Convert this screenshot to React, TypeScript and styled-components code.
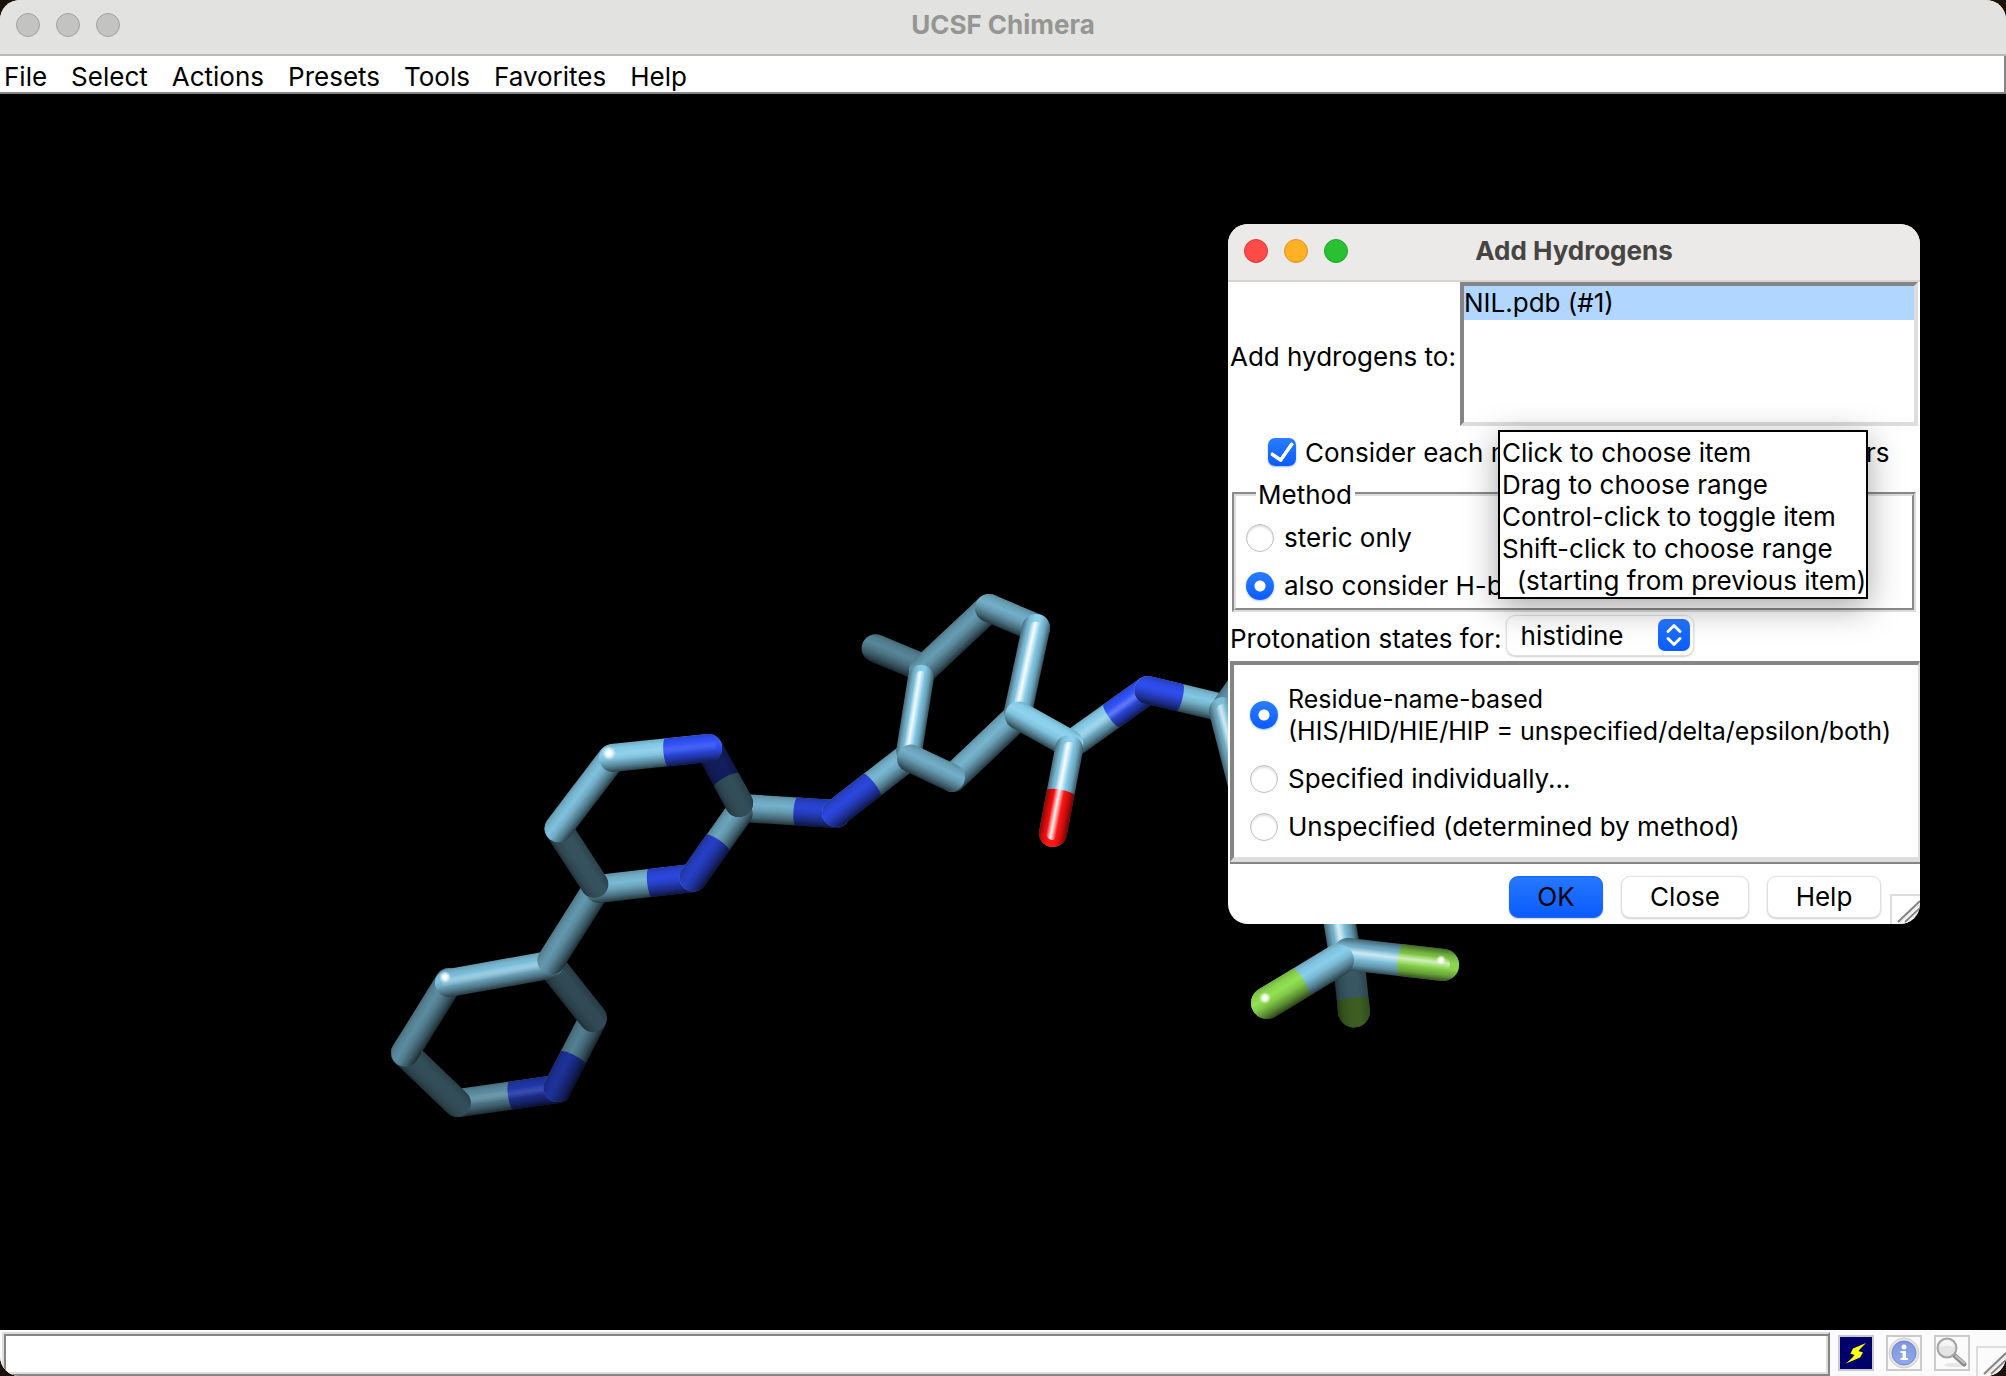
import React from "react";
import styled, { createGlobalStyle } from "styled-components";

const GlobalStyle = createGlobalStyle`
  * { box-sizing: border-box; }
  html, body, #root { height: 100%; }
  body {
    margin: 0;
    background: #1b120c;
    color: #000;
    font-family: Inter, "Liberation Sans", sans-serif;
    font-size: 26px;
    line-height: 32px;
    overflow: hidden;
  }
  button, input, select { font: inherit; color: inherit; }
`;

const SHADE = "#858585";
const LIGHT = "#dddddd";

/* ---------- main window ---------- */

const MainWindow = styled.main`
  position: relative;
  display: flex;
  flex-direction: column;
  height: 100vh;
  background: #fff;
  border-radius: 20px;
  overflow: hidden;
`;

const TitleBar = styled.header<{ $active?: boolean }>`
  display: grid;
  grid-template-columns: 1fr auto 1fr;
  align-items: center;
  flex: none;
  height: ${(p) => (p.$active ? 58 : 56)}px;
  padding: 0 16px ${(p) => (p.$active ? 2 : 4)}px;
  background: ${(p) => (p.$active ? "#ebeae8" : "#e2e2e0")};
  border-bottom: 2px solid ${(p) => (p.$active ? "#d6d5d4" : "#b8b8b7")};
`;

const Lights = styled.div`
  display: flex;
  gap: 16px;
`;

const Light = styled.button<{ $fill: string; $edge: string }>`
  width: 24px;
  height: 24px;
  padding: 0;
  border: 1px solid ${(p) => p.$edge};
  border-radius: 50%;
  background: ${(p) => p.$fill};
`;

const Title = styled.h1<{ $active?: boolean }>`
  margin: 0;
  font-size: 26px;
  line-height: 32px;
  font-weight: 700;
  color: ${(p) => (p.$active ? "#464544" : "#959593")};
`;

const MenuBar = styled.nav`
  display: flex;
  flex: none;
  gap: 24px;
  height: 38px;
  padding: 5px 4px 0;
  border-bottom: 2px solid ${SHADE};
  border-right: 2px solid ${SHADE};
`;

const MenuItem = styled.button`
  height: 32px;
  padding: 0;
  border: 0;
  background: none;
  line-height: 32px;
`;

const Viewport = styled.section`
  flex: 1;
  min-height: 0;
  background: #000;
`;

const Scene = styled.svg`
  display: block;
  width: 100%;
  height: 100%;
`;

const StatusBar = styled.footer`
  display: flex;
  flex: none;
  align-items: center;
  gap: 12px;
  height: 46px;
  padding-left: 2px;
  background: #fbfbfb;
`;

const StatusField = styled.input`
  flex: 1;
  align-self: flex-end;
  min-width: 0;
  height: 44px;
  margin-right: -4px;
  border: 2px solid;
  border-color: ${LIGHT} ${SHADE} ${SHADE} ${LIGHT};
  box-shadow: inset 2px 2px 0 ${SHADE}, inset -2px -2px 0 ${LIGHT};
  background: #fff;
  outline: none;
`;

const ToolButton = styled.button<{ $bg?: string }>`
  width: 36px;
  height: 36px;
  padding: 0;
  border: 2px solid #cbcbcb;
  background: ${(p) => p.$bg ?? "#fbfbfb"};
  svg { display: block; }
`;

const GripBox = styled.span`
  display: block;
  flex: none;
  align-self: flex-end;
  width: 30px;
  height: 30px;
  border: 2px solid ${LIGHT};
  border-width: 2px 0 0 2px;
  svg { display: block; }
`;

/* ---------- dialog ---------- */

const Dialog = styled.section`
  position: absolute;
  top: 224px;
  right: 86px;
  width: 692px;
  background: #fff;
  border-radius: 20px;
  overflow: hidden;
`;

const ListRow = styled.div`
  display: flex;
  align-items: center;
  justify-content: space-between;
  padding: 0 2px;
  label { padding-top: 5px; }
`;

const ListBox = styled.select`
  flex: none;
  width: 458px;
  height: 144px;
  padding: 0;
  border: 4px solid;
  border-color: ${SHADE} ${LIGHT} ${LIGHT} ${SHADE};
  border-radius: 0;
  background: #fff;
  outline: none;
  overflow: hidden;
  option {
    height: 34px;
    min-height: 34px;
    padding: 1px 0;
    line-height: 32px;
    border-radius: 0;
    color: #000;
  }
  option:checked {
    color: #000;
    background: #b1d6ff linear-gradient(#b1d6ff, #b1d6ff);
  }
`;

const CheckLabel = styled.label`
  display: flex;
  align-items: center;
  gap: 9px;
  height: 51px;
  padding: 2px 0 0 40px;
  white-space: nowrap;
`;

const CheckBox = styled.input`
  appearance: none;
  display: grid;
  place-items: center;
  width: 28px;
  height: 28px;
  margin: 0 0 2px;
  border-radius: 7px;
  background: linear-gradient(#2a7dff, #0a5cff);
  box-shadow: 0 1px 2px rgba(0, 90, 255, 0.4);
  &::after {
    content: "";
    width: 10px;
    height: 19px;
    margin-bottom: 4px;
    border: solid #fff;
    border-width: 0 4px 4px 0;
    border-radius: 2px;
    transform: rotate(35deg);
  }
`;

const Group = styled.fieldset`
  display: flex;
  flex-direction: column;
  gap: 2px;
  min-width: 0;
  margin: 0 4px;
  padding: 3px 10px 0;
  border: 4px groove #dddddd;
`;

const Legend = styled.legend`
  margin-left: 10px;
  padding: 2px 3px 0 2px;
`;

const RadioLabel = styled.label<{ $tall?: boolean; $dense?: boolean }>`
  display: flex;
  align-items: center;
  gap: 10px;
  min-height: ${(p) => (p.$tall ? 46 : 32)}px;
  padding-top: ${(p) => (p.$tall ? 2 : 0)}px;
  font-size: ${(p) => (p.$dense ? 25 : 26)}px;
  white-space: nowrap;
`;

const Radio = styled.input`
  appearance: none;
  flex: none;
  width: 28px;
  height: 28px;
  margin: 0;
  border: 1px solid #bdbdbd;
  border-radius: 50%;
  background: #fff;
  box-shadow: inset 0 2px 2px rgba(0, 0, 0, 0.12);
  &:checked {
    border: 0;
    background: radial-gradient(circle, #fff 5px, transparent 6px),
      linear-gradient(#2a7dff, #0a5cff);
    box-shadow: 0 1px 2px rgba(0, 90, 255, 0.35);
  }
`;

const StateRow = styled.div`
  display: flex;
  align-items: center;
  gap: 4px;
  height: 49px;
  padding: 4px 0 0 2px;
`;

const Picker = styled.div`
  position: relative;
  width: 188px;
  margin-bottom: 6px;
  svg {
    position: absolute;
    top: 4px;
    right: 4px;
    pointer-events: none;
  }
`;

const PickerSelect = styled.select`
  appearance: none;
  display: block;
  width: 100%;
  height: 41px;
  padding: 0 40px 0 14px;
  border: 1px solid #e0e0e0;
  border-radius: 9px;
  background: #fff;
  box-shadow: 0 1px 2px rgba(0, 0, 0, 0.2);
`;

const Frame = styled.div`
  display: flex;
  flex-direction: column;
  gap: 16px;
  margin-left: 2px;
  padding: 18px 16px 14px 16px;
  border: solid;
  border-width: 4px 2px 5px 4px;
  border-color: ${SHADE} ${LIGHT} ${LIGHT} ${SHADE};
`;

const Actions = styled.div`
  display: flex;
  justify-content: flex-end;
  gap: 18px;
  height: 62px;
  margin-left: 2px;
  padding-top: 12px;
  border-top: 2px solid ${SHADE};
`;

const ActionButton = styled.button<{ $primary?: boolean; $width: number }>`
  width: ${(p) => p.$width}px;
  height: 42px;
  padding: 0;
  border: 1px solid ${(p) => (p.$primary ? "#1a68ff" : "#e0e0e0")};
  border-radius: 9px;
  background: ${(p) => (p.$primary ? "linear-gradient(#2578ff, #0a5cff)" : "#fff")};
  box-shadow: 0 1px 2px rgba(0, 0, 0, 0.2);
`;

const CornerSlot = styled.div<{ $pull: number }>`
  display: flex;
  align-self: stretch;
  margin-left: -${(p) => p.$pull}px;
`;

const Tooltip = styled.div`
  position: absolute;
  top: 430px;
  right: 138px;
  width: 370px;
  padding: 5px 2px 0;
  border: 2px solid #000;
  background: #fff;
  box-shadow: 0 8px 32px rgba(0, 0, 0, 0.35);
  white-space: pre;
`;

/* ---------- molecule ---------- */

type Pt = [number, number];
type Tone = "c" | "n" | "o" | "f";

const BASE: Record<Tone, [number, number, number]> = {
  c: [135, 206, 235],
  n: [48, 80, 248],
  o: [255, 13, 13],
  f: [144, 224, 80],
};

/** Colour of an element at a brightness; above 1 it blends to white. */
const lit = (tone: Tone, b: number) => {
  const over = Math.max(0, b - 1);
  const k = Math.min(1, b);
  const [r, g, bl] = BASE[tone].map((v) => Math.round(v * k + (255 - v * k) * Math.min(1, over)));
  return `rgb(${r},${g},${bl})`;
};

interface Stick {
  a: Pt;
  b: Pt;
  tone: Tone;
  end?: Tone;
  at?: number;
  power: number;
  kind?: "top" | "mid" | "flat";
  gloss?: number;
  r?: number;
}

const PROFILES: Record<string, [number, number][]> = {
  top: [[0, 0.78], [0.15, 0.92], [0.35, 1], [0.55, 0.88], [0.8, 0.6], [1, 0.3]],
  mid: [[0, 0.5], [0.2, 0.85], [0.4, 1], [0.6, 1], [0.82, 0.75], [1, 0.38]],
  flat: [[0, 0.8], [0.3, 1], [0.6, 0.98], [0.85, 0.85], [1, 0.62]],
};

const sticks: Stick[] = [
  // pyridine ring
  { a: [459, 1103], b: [557, 1089], tone: "c", end: "n", at: 0.53, power: 0.7, gloss: 0.12 },
  { a: [592, 1021], b: [557, 1089], tone: "c", end: "n", at: 0.54, power: 0.62 },
  { a: [449, 982], b: [405, 1053], tone: "c", power: 0.68 },
  { a: [405, 1053], b: [457, 1103], tone: "c", power: 0.38, kind: "flat" },
  { a: [408, 1048], b: [405, 1053], tone: "c", power: 0.68 },
  { a: [551, 965], b: [593, 1018], tone: "c", power: 0.36, kind: "flat" },
  { a: [549, 965], b: [449, 983], tone: "c", power: 0.95, gloss: 0.25 },
  { a: [597, 888], b: [551, 961], tone: "c", power: 0.74 },
  // pyrimidine ring
  { a: [598, 889], b: [693, 878], tone: "c", end: "n", at: 0.55, power: 0.9 },
  { a: [742, 808], b: [836, 814], tone: "c", end: "n", at: 0.58, power: 0.86 },
  { a: [739, 813], b: [693, 878], tone: "c", end: "n", at: 0.46, power: 0.8 },
  { a: [558, 828], b: [595, 885], tone: "c", power: 0.4, kind: "flat" },
  { a: [709, 748], b: [739, 803], tone: "n", end: "c", at: 0.58, power: 0.38, kind: "flat" },
  { a: [612, 758], b: [558, 829], tone: "c", power: 0.94 },
  { a: [612, 758], b: [709, 748], tone: "c", end: "n", at: 0.56, power: 1.05, gloss: 0.08 },
  // toluene ring
  { a: [908, 757], b: [836, 813], tone: "c", end: "n", at: 0.5, power: 0.9 },
  { a: [923, 668], b: [875, 648], tone: "c", power: 0.65 },
  { a: [989, 608], b: [923, 670], tone: "c", power: 0.76 },
  { a: [1036, 628], b: [989, 608], tone: "c", power: 0.85 },
  { a: [1017, 717], b: [953, 778], tone: "c", power: 0.88 },
  { a: [921, 677], b: [909, 752], tone: "c", power: 1, kind: "mid", gloss: 0.9, r: 13 },
  { a: [952, 778], b: [910, 758], tone: "c", power: 0.85 },
  { a: [1036, 628], b: [1018, 712], tone: "c", power: 1.05, kind: "mid", gloss: 0.95 },
  // amide
  { a: [1072, 744], b: [1148, 690], tone: "c", end: "n", at: 0.52, power: 1.05, gloss: 0.22 },
  { a: [1070, 744], b: [1018, 715], tone: "c", power: 1.08 },
  { a: [1069, 749], b: [1053, 833], tone: "c", end: "o", at: 0.52, power: 1.05, kind: "mid", gloss: 0.95 },
  { a: [1223, 708], b: [1148, 690], tone: "c", end: "n", at: 0.58, power: 0.97 },
  // trifluoromethyl-phenyl
  { a: [1226, 707], b: [1258, 662], tone: "c", power: 0.72 },
  { a: [1223, 711], b: [1252, 824], tone: "c", power: 0.92, kind: "mid", gloss: 0.65 },
  { a: [1348, 955], b: [1354, 1012], tone: "c", end: "f", at: 0.8, power: 0.42, kind: "flat", r: 16 },
  { a: [1336, 900], b: [1345, 955], tone: "c", power: 0.95, kind: "mid", gloss: 0.7, r: 16 },
  { a: [1348, 954], b: [1443, 965], tone: "c", end: "f", at: 0.56, power: 0.95, kind: "mid", gloss: 0.6, r: 16 },
  { a: [1338, 960], b: [1267, 1003], tone: "c", end: "f", at: 0.52, power: 1.02, r: 16 },
];

const glints: { c: Pt; r: number }[] = [
  { c: [445, 977], r: 6 },
  { c: [609, 753], r: 7 },
  { c: [1265, 998], r: 6 },
  { c: [1441, 960], r: 5 },
];

/** Cylinder outline: curved rim at the start, rounded cap at the end. */
const outline = (a: Pt, b: Pt, r: number, rim: number) => {
  const dx = b[0] - a[0];
  const dy = b[1] - a[1];
  const len = Math.hypot(dx, dy) || 1;
  const px = (-dy / len) * r;
  const py = (dx / len) * r;
  const deg = (Math.atan2(dy, dx) * 180) / Math.PI;
  const f = (n: number) => n.toFixed(1);
  return (
    `M${f(a[0] + px)} ${f(a[1] + py)}L${f(b[0] + px)} ${f(b[1] + py)}` +
    `A${r} ${r} ${f(deg)} 0 0 ${f(b[0] - px)} ${f(b[1] - py)}` +
    `L${f(a[0] - px)} ${f(a[1] - py)}` +
    `A${f(r * Math.abs(rim))} ${r} ${f(deg)} 0 ${rim > 0 ? 0 : 1} ${f(a[0] + px)} ${f(a[1] + py)}Z`
  );
};

const Bond = ({ stick, id }: { stick: Stick; id: string }) => {
  const { a, b, tone, end, at = 0.5, power, kind = "top", gloss = 0, r = 14 } = stick;
  const dx = b[0] - a[0];
  const dy = b[1] - a[1];
  const len = Math.hypot(dx, dy) || 1;
  // the shading runs from the upper edge to the lower one, or left to right on upright sticks
  let nx = -dy / len;
  let ny = dx / len;
  const upright = kind === "mid" && Math.abs(ny) < 0.5;
  if (upright ? nx < 0 : ny < 0) {
    nx = -nx;
    ny = -ny;
  }
  const axis = {
    gradientUnits: "userSpaceOnUse",
    x1: a[0] - nx * r,
    y1: a[1] - ny * r,
    x2: a[0] + nx * r,
    y2: a[1] + ny * r,
  } as const;
  const gradient = (key: string, t: Tone) => (
    <linearGradient id={key} {...axis}>
      {PROFILES[kind].map(([o, v]) => (
        <stop key={o} offset={o} stopColor={lit(t, v * power)} />
      ))}
    </linearGradient>
  );
  const m: Pt = [a[0] + dx * at, a[1] + dy * at];
  return (
    <g>
      <defs>
        {gradient(`${id}a`, tone)}
        {end && gradient(`${id}b`, end)}
        <linearGradient id={`${id}g`} {...axis}>
          <stop offset={0.26} stopColor="#fff" stopOpacity={0} />
          <stop offset={0.44} stopColor="#fff" stopOpacity={gloss} />
          <stop offset={0.62} stopColor="#fff" stopOpacity={0} />
        </linearGradient>
      </defs>
      <path d={outline(a, b, r, 1)} fill={`url(#${id}a)`} />
      {end && <path d={outline(m, b, r, 0.22)} fill={`url(#${id}b)`} />}
      {gloss > 0 && <path d={outline(a, b, r * 0.5, 1)} fill={`url(#${id}g)`} />}
    </g>
  );
};

const Molecule = () => (
  <Scene viewBox="0 94 2006 1236" role="img" aria-label="Nilotinib stick model">
    <defs>
      <radialGradient id="glint">
        <stop offset={0} stopColor="#fff" />
        <stop offset={0.4} stopColor="#fff" stopOpacity={0.9} />
        <stop offset={1} stopColor="#fff" stopOpacity={0} />
      </radialGradient>
    </defs>
    {sticks.map((s, i) => (
      <Bond key={i} stick={s} id={`bond${i}`} />
    ))}
    {glints.map((g, i) => (
      <circle key={i} cx={g.c[0]} cy={g.c[1]} r={g.r} fill="url(#glint)" />
    ))}
  </Scene>
);

/* ---------- icons ---------- */

const Bolt = () => (
  <svg width="32" height="32" viewBox="0 0 32 32" aria-hidden="true">
    <path d="M26 6L13 11.500L10.500 16.500L14.500 18L12 21L6 26.500L20 20.500L23 15.500L18.500 14L21 11Z" fill="#ffff10" />
  </svg>
);

const Info = () => (
  <svg width="32" height="32" viewBox="0 0 32 32" aria-hidden="true">
    <defs>
      <linearGradient id="infoFill" x1="0" y1="0" x2="0" y2="1">
        <stop offset="0" stopColor="#7f97dc" />
        <stop offset="1" stopColor="#8fa9f0" />
      </linearGradient>
    </defs>
    <circle cx="16" cy="16" r="15" fill="#e4e4e2" stroke="#cfcfcd" />
    <circle cx="16" cy="16" r="12" fill="url(#infoFill)" stroke="#6f88d4" />
    <circle cx="16" cy="10" r="2.500" fill="#fff" />
    <path d="M12.500 14H18V21H20V23H12.500V21H14.500V16H12.500Z" fill="#fff" />
  </svg>
);

const Magnifier = () => (
  <svg width="32" height="32" viewBox="0 0 32 32" aria-hidden="true">
    <ellipse cx="19" cy="28" rx="11" ry="2" fill="#e6e6e6" />
    <path d="M18 18L28 27" stroke="#8a8a8a" strokeWidth="5" strokeLinecap="round" />
    <path d="M20 19L28 26" stroke="#c4c4c4" strokeWidth="2" strokeLinecap="round" />
    <circle cx="11" cy="11" r="9.500" fill="#e3e3e3" stroke="#a3a3a3" strokeWidth="2" />
    <path d="M4 10A7 7 0 0 1 18 10Q11 7 4 10Z" fill="#f5f5f5" />
  </svg>
);

const Chevrons = () => (
  <svg width="32" height="32" viewBox="0 0 32 32" aria-hidden="true">
    <defs>
      <linearGradient id="stepFill" x1="0" y1="0" x2="0" y2="1">
        <stop offset="0" stopColor="#2578ff" />
        <stop offset="1" stopColor="#0a5cff" />
      </linearGradient>
    </defs>
    <rect width="32" height="32" rx="7" fill="url(#stepFill)" />
    <path d="M10 12.500L16 6.500L22 12.500M10 19.500L16 25.500L22 19.500" fill="none" stroke="#fff" strokeWidth="3" strokeLinecap="round" strokeLinejoin="round" />
  </svg>
);

const Grip = () => (
  <GripBox aria-hidden="true">
    <svg width="28" height="28" viewBox="0 0 28 28">
      <path d="M6 26L28 5M13 26L28 12M20 26L28 19" stroke={SHADE} strokeWidth="2" />
      <path d="M8 27L28 8M15 27L28 15" stroke={LIGHT} strokeWidth="1" />
    </svg>
  </GripBox>
);

/* ---------- app ---------- */

const menus = ["File", "Select", "Actions", "Presets", "Tools", "Favorites", "Help"];

const tips = [
  "Click to choose item",
  "Drag to choose range",
  "Control-click to toggle item",
  "Shift-click to choose range",
  "  (starting from previous item)",
];

const lightNames = ["Close window", "Minimize window", "Zoom window"];
const activeLights = [
  ["#ff4b47", "#e0383a"],
  ["#ffb024", "#dd951a"],
  ["#29c132", "#1fa629"],
];

const WindowLights = ({ active }: { active?: boolean }) => (
  <Lights>
    {lightNames.map((name, i) => (
      <Light
        key={name}
        aria-label={name}
        $fill={active ? activeLights[i][0] : "#c3c3c1"}
        $edge={active ? activeLights[i][1] : "#a2a2a0"}
      />
    ))}
  </Lights>
);

export default function App() {
  return (
    <>
      <GlobalStyle />
      <MainWindow>
        <TitleBar>
          <WindowLights />
          <Title>UCSF Chimera</Title>
        </TitleBar>
        <MenuBar>
          {menus.map((m) => (
            <MenuItem key={m}>{m}</MenuItem>
          ))}
        </MenuBar>
        <Viewport>
          <Molecule />
        </Viewport>
        <StatusBar>
          <StatusField aria-label="Status" readOnly />
          <ToolButton $bg="#00006c" aria-label="Rapid access">
            <Bolt />
          </ToolButton>
          <ToolButton aria-label="Information">
            <Info />
          </ToolButton>
          <ToolButton aria-label="Inspect selection">
            <Magnifier />
          </ToolButton>
          <CornerSlot $pull={6}>
            <Grip />
          </CornerSlot>
        </StatusBar>

        <Dialog role="dialog" aria-labelledby="dialog-title">
          <TitleBar $active>
            <WindowLights active />
            <Title as="h2" id="dialog-title" $active>
              Add Hydrogens
            </Title>
          </TitleBar>
          <ListRow>
            <label htmlFor="models">Add hydrogens to:</label>
            <ListBox id="models" multiple defaultValue={["1"]}>
              <option value="1">NIL.pdb (#1)</option>
            </ListBox>
          </ListRow>
          <CheckLabel>
            <CheckBox type="checkbox" defaultChecked />
            Consider each model in isolation from all others
          </CheckLabel>
          <Group>
            <Legend>Method</Legend>
            <RadioLabel $tall>
              <Radio type="radio" name="method" />
              steric only
            </RadioLabel>
            <RadioLabel $tall>
              <Radio type="radio" name="method" defaultChecked />
              also consider H-bonds (slower)
            </RadioLabel>
          </Group>
          <StateRow>
            <label htmlFor="residue">Protonation states for:</label>
            <Picker>
              <PickerSelect id="residue">
                <option>histidine</option>
              </PickerSelect>
              <Chevrons />
            </Picker>
          </StateRow>
          <Frame>
            <RadioLabel $dense>
              <Radio type="radio" name="state" defaultChecked />
              <span>
                Residue-name-based
                <br />
                (HIS/HID/HIE/HIP = unspecified/delta/epsilon/both)
              </span>
            </RadioLabel>
            <RadioLabel>
              <Radio type="radio" name="state" />
              Specified individually...
            </RadioLabel>
            <RadioLabel>
              <Radio type="radio" name="state" />
              Unspecified (determined by method)
            </RadioLabel>
          </Frame>
          <Actions>
            <ActionButton $primary $width={94}>OK</ActionButton>
            <ActionButton $width={128}>Close</ActionButton>
            <ActionButton $width={114}>Help</ActionButton>
            <CornerSlot $pull={9}>
              <Grip />
            </CornerSlot>
          </Actions>
        </Dialog>

        <Tooltip role="tooltip">
          {tips.map((t) => (
            <div key={t}>{t}</div>
          ))}
        </Tooltip>
      </MainWindow>
    </>
  );
}
